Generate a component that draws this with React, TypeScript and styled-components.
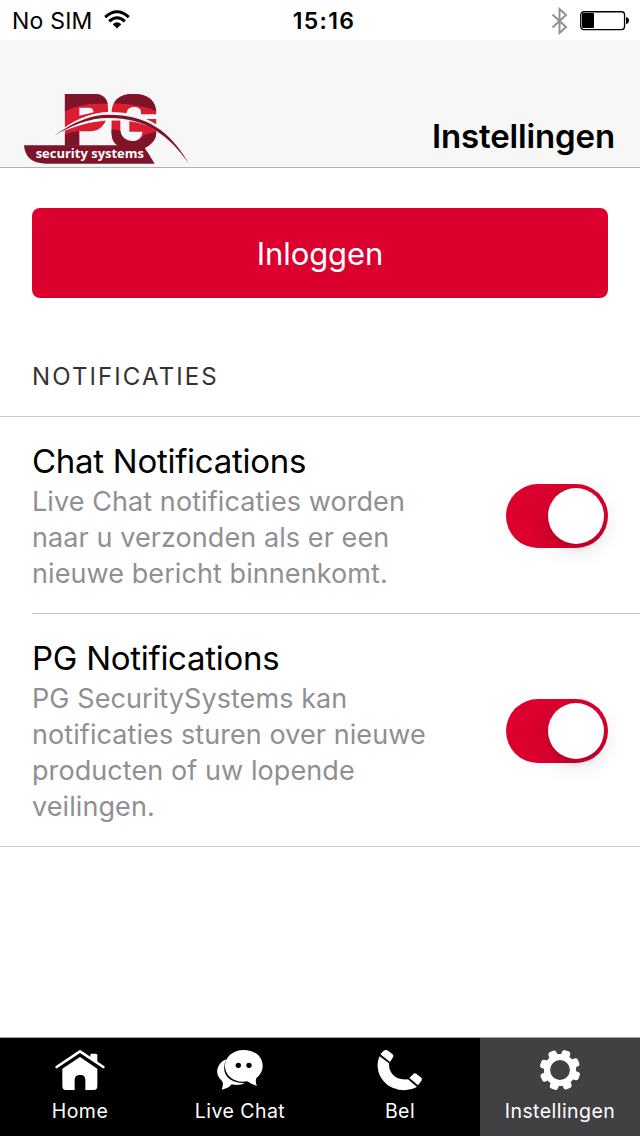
import React from 'react';
import styled, { createGlobalStyle } from 'styled-components';

const GlobalStyle = createGlobalStyle`
  * { box-sizing: border-box; }
  body { margin: 0; background: #fff; font-family: Inter, "Liberation Sans", sans-serif; color: #000; }
`;

const Screen = styled.div`
  width: 640px;
  height: 1136px;
  display: flex;
  flex-direction: column;
  background: #fff;
  overflow: hidden;
`;

const StatusBar = styled.div`
  height: 40px;
  flex: none;
  display: grid;
  grid-template-columns: 1fr auto 1fr;
  align-items: center;
  padding: 0 11px 0 12px;
`;

const Carrier = styled.div`
  display: flex;
  align-items: center;
  gap: 11px;
  padding-top: 1px;
  font-size: 23px;
  line-height: 40px;
  letter-spacing: 0.2px;
  white-space: nowrap;
  svg { margin-bottom: 2px; }
`;

const Clock = styled.div`
  padding: 1px 0 0 7px;
  font-size: 23px;
  font-weight: 600;
  line-height: 40px;
  letter-spacing: 1.3px;
`;

const Indicators = styled.div`
  display: flex;
  justify-content: flex-end;
  align-items: center;
  gap: 12px;
  padding-top: 1px;
`;

const Header = styled.header`
  height: 128px;
  flex: none;
  display: flex;
  justify-content: space-between;
  align-items: flex-end;
  padding: 0 25px 0 15px;
  background: #f7f7f7;
  border-bottom: 1px solid #b2b2b2;
`;

const Title = styled.h1`
  margin: 0 0 10px;
  font-size: 33px;
  line-height: 42px;
  font-weight: 600;
  letter-spacing: -0.14px;
`;

const Content = styled.main`
  flex: 1;
  display: flex;
  flex-direction: column;
`;

const LoginButton = styled.button`
  height: 90px;
  margin: 40px 32px 0;
  padding: 2px 0 0;
  border: 0;
  border-radius: 8px;
  background: #dc002e;
  color: #fff;
  font: 400 31px/40px Inter, sans-serif;
  letter-spacing: -0.1px;
`;

const SectionTitle = styled.h2`
  margin: 0;
  padding: 63px 32px 23px;
  font-size: 24px;
  line-height: 32px;
  font-weight: 400;
  letter-spacing: 2.1px;
  color: #333;
`;

const List = styled.div`
  border-top: 1px solid #c8c7cc;
  border-bottom: 1px solid #c8c7cc;
  padding-left: 32px;
`;

const Row = styled.div`
  display: flex;
  align-items: center;
  justify-content: space-between;
  padding: 22px 32px 21px 0;
  & + & { border-top: 1px solid #c8c7cc; }
`;

const RowTitle = styled.div`
  font-size: 33px;
  line-height: 44px;
  letter-spacing: -0.28px;
`;

const Description = styled.div`
  padding-top: 1px;
  font-size: 27px;
  line-height: 36px;
  letter-spacing: 0.08px;
  color: #8f8f94;
  white-space: pre-line;
`;

const Toggle = styled.div`
  width: 102px;
  height: 64px;
  flex: none;
  display: flex;
  justify-content: flex-end;
  padding: 4px;
  border-radius: 32px;
  background: #dc002e;
`;

const Knob = styled.div`
  width: 56px;
  height: 56px;
  border-radius: 50%;
  background: #fff;
  box-shadow: 0 6px 24px rgba(0, 0, 0, 0.12), 0 6px 4px rgba(0, 0, 0, 0.08);
`;

const TabBar = styled.nav`
  height: 99px;
  flex: none;
  display: grid;
  grid-template-columns: repeat(4, 1fr);
  border-top: 1px solid #a0a0a0;
  background: #000;
`;

const Tab = styled.div<{ $active?: boolean }>`
  display: flex;
  flex-direction: column;
  align-items: center;
  padding-top: 11px;
  background: ${(p) => (p.$active ? '#414042' : '#000')};
  color: #fff;
`;

const TabLabel = styled.span`
  margin-top: 6px;
  font-size: 19.5px;
  line-height: 28px;
  letter-spacing: 0.45px;
`;

const Wifi = () => (
  <svg width="26" height="20" viewBox="0 0 26 20" fill="none" stroke="#000" strokeWidth="3">
    <path d="M1.2 7.2Q13-3.7 24.8 7.2" />
    <path d="M5.2 11.4Q13 4.2 20.8 11.4" />
    <path d="M8.7 14.2Q13 10.3 17.3 14.2L13 18.6Z" fill="#000" stroke="none" />
  </svg>
);

const Bluetooth = () => (
  <svg width="17" height="28" viewBox="0 0 17 28" fill="none" stroke="#929292" strokeWidth="2">
    <path d="M1.5 7.5L15 20L8.5 26V2L15 8L1.5 20.5" />
  </svg>
);

const Battery = () => (
  <svg width="49" height="20" viewBox="0 0 49 20">
    <rect x=".75" y=".75" width="43.8" height="17.8" rx="3" fill="none" stroke="#000" strokeWidth="1.3" />
    <rect x="2" y="2.1" width="12" height="15" rx="1" />
    <path d="M46 6Q49 6.5 49 9.5T46 13Z" />
  </svg>
);

const Logo = () => (
  <svg width="180" height="82" viewBox="0 0 540 246">
    <defs>
      <clipPath id="letterP">
        <path d="M149 27H238C269 27 279 46 279 68V76C279 106 262 139 225 139H193V182H149Z" />
      </clipPath>
      <clipPath id="letterG">
        <path d="M289 90C289 48 311 27 355 27C402 27 425 49 424 88H378V80C378 61 336 61 336 82L316 100V135C316 155 333 168 352 168C370 168 382 156 382 140H343V102H424V140C424 164 410 178 390 188H330C300 186 289 166 289 138Z" />
      </clipPath>
    </defs>
    <g clipPath="url(#letterP)">
      <path fill="#dc1c30" d="M140 20H290V190H140Z" />
      <path fill="#7d1429" d="M140 20H290V58Q205 48 140 84Z" />
      <path fill="#7d1429" d="M140 152Q166 140 193 137V190H140Z" />
    </g>
    <path fill="#f7f7f7" d="M193 68H223Q235 68 236 82L193 92Z" />
    <g clipPath="url(#letterG)">
      <path fill="#dc1c30" d="M280 20H430V190H280Z" />
      <path fill="#7d1429" d="M280 20H430V82Q385 57 280 54Z" />
      <path fill="#7d1429" d="M280 132L316 137Q335 168 352 168Q377 168 388 149L430 138V195H280Z" />
    </g>
    <path fill="#f7f7f7" d="M117 152C175 103 228 81 285 81C395 81 472 132 522 236C460 144 390 104 305 107C230 105 170 126 117 152Z" />
    <path fill="#7d1429" d="M117 152C175 111 228 89 281 89C395 89 465 137 522 236C457 145 387 98 281 99C220 99 170 122 117 152Z" />
    <path fill="#7d1429" d="M27 181H393Q386 190 398 202L419 236H91C51 234 30 217 27 181Z" />
    <text x="62" y="220" fill="#fff" fontFamily="Open Sans, sans-serif" fontWeight="700" fontSize="36" textLength="325" lengthAdjust="spacingAndGlyphs">security systems</text>
  </svg>
);

const HomeIcon = () => (
  <svg width="50" height="42" viewBox="0 0 150 126">
    <path d="M5 54L75 7L145 54" fill="none" stroke="#fff" strokeWidth="8" strokeLinecap="round" strokeLinejoin="round" />
    <path fill="#fff" d="M106 24V18Q106 14 110 14H122Q127 14 127 19V40L106 26Z" />
    <path fill="#fff" d="M22 59L75 24L127 59V112Q127 123 117 123H91V92Q90 78 78 78H72Q60 79 59 92V123H32Q22 123 22 112Z" />
  </svg>
);

const ChatIcon = () => (
  <svg width="48" height="42" viewBox="0 0 144 126">
    <path fill="#fff" d="M31 31C8 39 -5 67 10 87C14 92 21 96 21 104Q20 115 17 122Q37 119 47 106Q69 111 87 102C55 104 28 89 25 64Q23 45 31 31Z" />
    <path fill="#fff" d="M83 3C116 3 140 22 140 50C140 66 132 78 121 87Q117 99 123 110Q109 108 94 97C58 104 29 82 27 55C25 25 50 3 83 3Z" />
    <circle cx="67" cy="49" r="8" />
    <circle cx="99" cy="49" r="8" />
  </svg>
);

const PhoneIcon = () => (
  <svg width="46" height="42" viewBox="0 0 138 126">
    <path fill="#fff" d="M8 22C-8 54 7 98 47 116Q86 132 120 114L93 91Q58 94 43 71Q35 60 36 43Z" />
    <path fill="#fff" d="M10 16L20 5Q25 1 31 4L46 15Q51 19 48 25L39 39ZM97 87L109 75Q113 71 118 74L133 86Q137 90 133 96L123 109Z" />
  </svg>
);

const GearIcon = () => (
  <svg width="42" height="42" viewBox="-21 -21 42 42">
    <circle r="13" fill="none" stroke="#fff" strokeWidth="6.2" />
    {[0, 45, 90, 135, 180, 225, 270, 315].map((a) => (
      <path key={a} transform={`rotate(${a + 20})`} fill="#fff" d="M-4.4-14L-4.3-18Q-4.1-20.4-2-20.4H2Q4.1-20.4 4.3-18L4.4-14Z" />
    ))}
  </svg>
);

const settings = [
  {
    title: 'Chat Notifications',
    text: 'Live Chat notificaties worden\nnaar u verzonden als er een\nnieuwe bericht binnenkomt.',
  },
  {
    title: 'PG Notifications',
    text: 'PG SecuritySystems kan\nnotificaties sturen over nieuwe\nproducten of uw lopende\nveilingen.',
  },
];

const tabs = [
  { label: 'Home', Icon: HomeIcon },
  { label: 'Live Chat', Icon: ChatIcon },
  { label: 'Bel', Icon: PhoneIcon },
  { label: 'Instellingen', Icon: GearIcon, active: true },
];

export default function App() {
  return (
    <Screen>
      <GlobalStyle />
      <StatusBar>
        <Carrier>No SIM <Wifi /></Carrier>
        <Clock>15:16</Clock>
        <Indicators><Bluetooth /><Battery /></Indicators>
      </StatusBar>
      <Header>
        <Logo />
        <Title>Instellingen</Title>
      </Header>
      <Content>
        <LoginButton>Inloggen</LoginButton>
        <SectionTitle>NOTIFICATIES</SectionTitle>
        <List>
          {settings.map((s) => (
            <Row key={s.title}>
              <div>
                <RowTitle>{s.title}</RowTitle>
                <Description>{s.text}</Description>
              </div>
              <Toggle><Knob /></Toggle>
            </Row>
          ))}
        </List>
      </Content>
      <TabBar>
        {tabs.map(({ label, Icon, active }) => (
          <Tab key={label} $active={active}>
            <Icon />
            <TabLabel>{label}</TabLabel>
          </Tab>
        ))}
      </TabBar>
    </Screen>
  );
}
